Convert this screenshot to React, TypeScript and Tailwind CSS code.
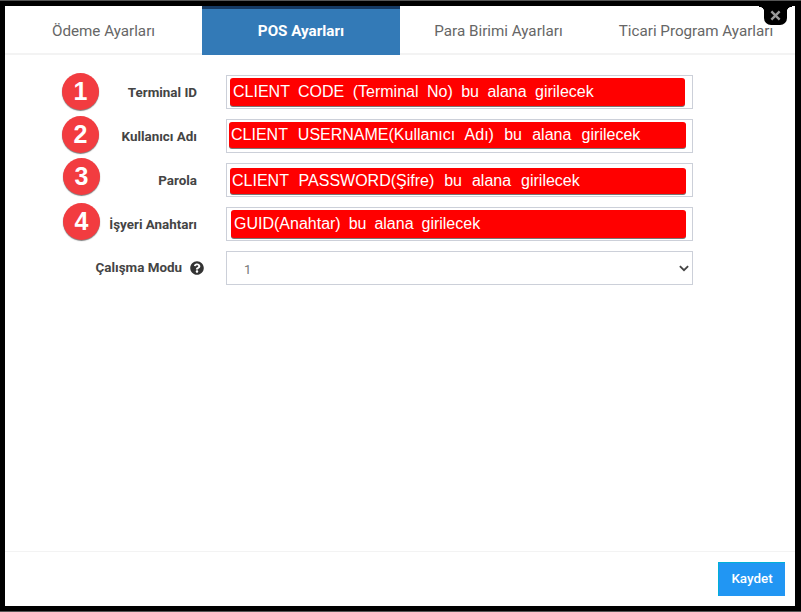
import React from "react";
import { FaQuestionCircle } from "react-icons/fa";

function Badge({ n, cls }: { n: number; cls: string }) {
  return (
    <div
      className={`absolute flex h-[37px] w-[37px] items-center justify-center rounded-full bg-[#f23c40] text-[25px] font-bold leading-none text-white shadow-[0_1px_1px_rgba(0,0,0,0.5)] [font-family:'Liberation_Sans',sans-serif] ${cls}`}
    >
      {n}
    </div>
  );
}

function Row({ label, value, redCls, textCls }: { label: string; value: string; redCls: string; textCls: string }) {
  return (
    <div className="flex h-[34px] items-center">
      <label className="mt-[3px] w-[192px] text-right text-[13.4px] font-bold text-[#444]">{label}</label>
      <div className="relative ml-[29px] h-[34px] w-[467px] border border-[#ccd0d9] bg-white">
        <div
          className={`absolute flex items-center rounded-[3px] bg-[#ff0000] text-[16px] leading-none text-white shadow-[0_1px_0_#777] [font-family:'Liberation_Sans',sans-serif] ${redCls}`}
        >
          <span className={textCls}>{value}</span>
        </div>
      </div>
    </div>
  );
}

export default function App() {
  return (
    <div className="relative flex h-[612px] w-[801px] flex-col overflow-hidden border-y border-[#555] bg-black pb-[5px] pl-[5px] pr-[6px] pt-[5px] [font-family:'Roboto','Liberation_Sans',sans-serif]">
      <div className="relative flex min-h-0 flex-1 flex-col bg-white">
        <div className="flex h-[49px] shrink-0 border-b-2 border-[#f3f3f3] text-[15.2px] text-[#666]">
          <div className="flex w-[197px] items-center justify-center pt-[3px]">Ödeme Ayarları</div>
          <div className="-mb-[2px] flex w-[198px] items-center justify-center border-t-[3px] border-[#163a63] bg-[#337ab7] pb-[2px] font-bold text-white">
            POS Ayarları
          </div>
          <div className="flex w-[197px] items-center justify-center pt-[3px]">Para Birimi Ayarları</div>
          <div className="flex w-[198px] items-center justify-center pt-[3px]">Ticari Program Ayarları</div>
        </div>

        <div className="flex flex-1 flex-col gap-[10px] pt-[20px]">
          <Row label="Terminal ID" value="CLIENT CODE (Terminal No) bu alana girilecek" redCls="left-[3px] top-[2px] h-[28px] w-[455px] [word-spacing:4px]" textCls="-mt-[1px] ml-[3px]" />
          <Row label="Kullanıcı Adı" value="CLIENT USERNAME(Kullanıcı Adı) bu alana girilecek" redCls="left-[2px] top-[2px] h-[26px] w-[457px] [word-spacing:5.8px]" textCls="ml-[2px]" />
          <Row label="Parola" value="CLIENT PASSWORD(Şifre) bu alana girilecek" redCls="left-[3px] top-[4px] h-[26px] w-[456px] [word-spacing:5.5px]" textCls="ml-[2px]" />
          <Row label="İşyeri Anahtarı" value="GUID(Anahtar) bu alana girilecek" redCls="left-[4px] top-[2px] h-[28px] w-[455px] [word-spacing:3.5px]" textCls="ml-[3px]" />
          <div className="flex h-[34px] items-center">
            <label className="mt-[1px] w-[177px] text-right text-[13.4px] font-bold text-[#444]">Çalışma Modu</label>
            <FaQuestionCircle className="ml-[8px] h-[14px] w-[14px] text-[#333]" />
            <div className="relative ml-[22px] flex h-[34px] w-[467px] items-center justify-between border border-[#ccd0d9] bg-white pl-[17px] pr-[3px] text-[13px] text-[#777]">
              <span className="mt-[3px]">1</span>
              <svg viewBox="0 0 16 16" className="mr-[-1px] h-[12px] w-[12px]" fill="none" stroke="#444" strokeWidth="2.4">
                <path d="M2.5 5.5 8 11l5.500-5.500" />
              </svg>
            </div>
          </div>
        </div>

        <div className="flex h-[55px] shrink-0 items-start justify-end border-t border-[#f3f3f3] pr-[10px] pt-[10px]">
          <button className="h-[34px] w-[67px] border-l border-t border-[#00b0d8] bg-[#2196f3] text-[13.4px] font-medium text-white">Kaydet</button>
        </div>

        <div className="absolute right-[8px] top-0 flex h-[19px] w-[23px] items-center justify-center rounded-b-[7px] bg-black">
          <svg viewBox="0 0 12 12" className="h-[11px] w-[11px]" stroke="#999" strokeWidth="2.6">
            <path d="M1.5 1.5 10.5 10.5M10.5 1.5 1.5 10.5" />
          </svg>
        </div>
        <div className="absolute right-[31px] top-0 h-[6px] w-[5px] bg-[radial-gradient(circle_at_0_100%,#fff_5px,#000_5.500px)]" />
        <div className="absolute right-[3px] top-0 h-[6px] w-[5px] bg-[radial-gradient(circle_at_100%_100%,#fff_5px,#000_5.500px)]" />
      </div>

      <Badge n={1} cls="left-[62px] top-[72px]" />
      <Badge n={2} cls="left-[62px] top-[115px]" />
      <Badge n={3} cls="left-[63px] top-[157px]" />
      <Badge n={4} cls="left-[63px] top-[202px]" />
    </div>
  );
}
